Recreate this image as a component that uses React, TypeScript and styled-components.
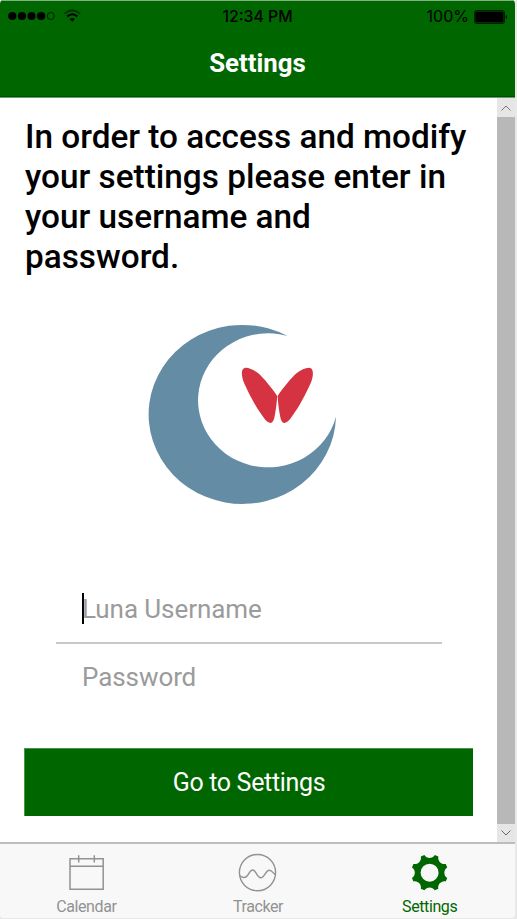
import React from "react";
import styled, { createGlobalStyle } from "styled-components";

const GREEN = "#006600";

const GlobalStyle = createGlobalStyle`
  * { box-sizing: border-box; }
  body { margin: 0; background: #e8e8e8; font-family: Roboto, sans-serif; }
`;

const Phone = styled.div`
  width: 515px;
  height: 918px;
  display: grid;
  grid-template-columns: minmax(0, 1fr);
  grid-template-rows: 98px 744px 76px;
  background: #fff;
  border-radius: 4px;
  overflow: hidden;
`;

const Header = styled.header`
  background: ${GREEN};
  border-top: 1px solid #85b085;
  border-bottom: 1px solid #669c66;
  box-shadow: inset 0 -1px #004f00;
  display: grid;
  grid-template-rows: 29px 1fr;
`;

const StatusBar = styled.div`
  display: grid;
  grid-template-columns: 1fr auto 1fr;
  align-items: center;
  padding: 0 6px 0 8px;
  font: 500 16px/29px Inter, sans-serif;
  color: #000;
`;

const Signal = styled.svg`
  display: block;
`;

const Clock = styled.span`
  font-size: 15.8px;
  padding-right: 2px;
`;

const BatteryGroup = styled.div`
  display: flex;
  justify-content: flex-end;
  align-items: center;
  gap: 5px;
  font-size: 16px;
  font-weight: 400;
  padding-top: 1px;
`;

const Title = styled.h1`
  margin: 0;
  padding-top: 17px;
  text-align: center;
  color: #fff;
  font-size: 25.8px;
  line-height: 33px;
  font-weight: 700;
`;

const Body = styled.div`
  display: grid;
  grid-template-columns: minmax(0, 1fr) 18px;
`;

const Content = styled.main`
  display: flex;
  flex-direction: column;
  padding: 19px 24px 0;
`;

const Prompt = styled.p`
  margin: 0 0 0 1px;
  width: 446px;
  font-size: 33.35px;
  line-height: 40px;
  font-weight: 500;
  color: #000;
`;

const Logo = styled.svg`
  display: block;
  margin: 43px 0 0 120px;
`;

const Form = styled.form`
  display: flex;
  flex-direction: column;
  margin-top: 57px;
`;

const Field = styled.label<{ $divided?: boolean }>`
  display: flex;
  align-items: center;
  height: ${(p) => (p.$divided ? "67px" : "68px")};
  margin: 0 31px 0 32px;
  padding: 0 0 2px 26px;
  border-bottom: ${(p) => (p.$divided ? "2px solid #c8c8cd" : "none")};
  color: #9b9b9b;
  font-size: 26px;
  letter-spacing: -0.08px;
`;

const Caret = styled.span`
  width: 2px;
  height: 31px;
  margin-right: -2px;
  background: #000;
`;

const Submit = styled.button`
  height: 68px;
  margin-top: 36px;
  border: 0;
  border-top: 1px solid #4b924b;
  border-left: 1px solid #4b924b;
  padding: 0;
  background: ${GREEN};
  color: #fff;
  font: 400 25px Roboto, sans-serif;
  letter-spacing: -0.33px;
`;

const Scrollbar = styled.div`
  display: grid;
  grid-template-rows: 19px 1fr 18px;
`;

const ScrollButton = styled.div`
  display: grid;
  place-items: center;
  background: #e6e6e6;
`;

const Thumb = styled.div`
  background: #b8b8b8;
`;

const TabBar = styled.nav`
  display: grid;
  grid-template-columns: repeat(3, 1fr);
  background: #f8f8f8;
  border-top: 2px solid #bdbdbd;
`;

const Tab = styled.div<{ $active?: boolean }>`
  display: flex;
  flex-direction: column;
  align-items: center;
  padding-top: 9px;
  gap: 4px;
  color: ${(p) => (p.$active ? GREEN : "#929292")};
  font-size: 16px;
  line-height: 20px;
  letter-spacing: -0.4px;
`;

const TabLabel = styled.span`
  padding-left: 1px;
`;

const gearPath = Array.from({ length: 8 }, (_, i) => {
  const point = (radius: number, degrees: number) => {
    const a = ((degrees + i * 45) * Math.PI) / 180;
    return `${(20.6 + radius * Math.cos(a)).toFixed(2)} ${(19.7 + radius * Math.sin(a)).toFixed(2)}`;
  };
  return `${i ? "L" : "M"}${point(18.4, 16.5)} L${point(18.4, 28.5)} C${point(14.1, 33)} ${point(14.1, 57)} ${point(18.4, 61.5)}`;
}).join(" ");

export default function App() {
  return (
    <>
      <GlobalStyle />
      <Phone>
        <Header>
          <StatusBar>
            <Signal width="76" height="18" viewBox="0 0 76 18">
              {[4.3, 13.9, 23.5, 33.1].map((x) => (
                <circle key={x} cx={x} cy="9" r="4.1" />
              ))}
              <circle cx="42.8" cy="9" r="3.6" fill="none" stroke="#000" strokeWidth=".7" />
              <g fill="none" stroke="#000">
                <path d="M56.5 6.8Q64.3 0 72.1 6.8" strokeWidth="2" opacity=".45" />
                <path d="M59.2 9.5Q64.3 5 69.4 9.5" strokeWidth="2" />
              </g>
              <path d="M61.6 12Q64.3 9.8 67 12L64.3 14.8Z" />
            </Signal>
            <Clock>12:34 PM</Clock>
            <BatteryGroup>
              100%
              <svg width="35" height="14" viewBox="0 0 35 14">
                <rect x=".5" y=".5" width="30" height="13" rx="2" fill="none" stroke="#000" strokeWidth=".7" />
                <rect x="1.2" y="1.5" width="28.4" height="11" rx="1" />
                <path d="M31.8 4.5Q34.2 7 31.8 9.5Z" />
              </svg>
            </BatteryGroup>
          </StatusBar>
          <Title>Settings</Title>
        </Header>
        <Body>
          <Content>
            <Prompt>In order to access and modify your settings please enter in your username and password.</Prompt>
            <Logo width="200" height="200" viewBox="144 320 200 200">
              <path fill="#648ca5" d="M287.5 336A93.7 89.5 0 1 0 336 416.5A70 67 0 1 1 287.5 336Z" />
              <g fill="#d63342">
                <path d="M277.2 396C271 387 264 378.5 258.3 373.3C254 370 249.5 368 246 367.8C242.5 367.8 241.5 371 242 375.5C242.5 379 243.5 382 245 385C248 391.5 251.5 398.5 255 404.5C258 409.5 261 414 263.8 417.8C266 421 268.3 423 270.5 423C273 423 274.2 419 274.8 415.5C276 409.5 276.8 402.5 277.2 396Z" />
                <path d="M277.6 396C283.8 387 290.8 378.5 296.5 373.3C300.8 370 305.3 368 308.8 367.8C312.3 367.8 313.3 371 312.8 375.5C312.3 379 311.3 382 309.8 385C306.8 391.5 303.3 398.5 299.8 404.5C296.8 409.5 293.8 414 291 417.8C288.8 421 286.5 423 284.3 423C281.8 423 280.6 419 280 415.5C278.8 409.5 278 402.5 277.6 396Z" />
              </g>
            </Logo>
            <Form>
              <Field $divided><Caret />Luna Username</Field>
              <Field>Password</Field>
              <Submit type="button">Go to Settings</Submit>
            </Form>
          </Content>
          <Scrollbar>
            <ScrollButton>
              <svg width="10" height="6" fill="none" stroke="#777"><path d="M.5 5.5L5 1L9.5 5.5" /></svg>
            </ScrollButton>
            <Thumb />
            <ScrollButton>
              <svg width="10" height="6" fill="none" stroke="#666"><path d="M.5 .5L5 5L9.5 .5" /></svg>
            </ScrollButton>
          </Scrollbar>
        </Body>
        <TabBar>
          <Tab>
            <svg width="40" height="40" viewBox="0 0 40 40" fill="none" stroke="currentColor" strokeWidth="1.5">
              <path d="M4 5.8H37.2V36.3H4ZM4 13.3H37.2M12.7 2.3V9.5M28.3 2.3V9.5" />
            </svg>
            <TabLabel>Calendar</TabLabel>
          </Tab>
          <Tab>
            <svg width="40" height="40" viewBox="0 0 40 40" fill="none" stroke="currentColor" strokeWidth="1.4">
              <circle cx="20.5" cy="19.6" r="18.1" />
              <path d="M2.8 22.5C4.5 24.7 8.5 25.5 10.5 22.5C12.5 19.5 13.5 17 15.8 17C19 17 20 24.8 23.7 24.8C27.5 24.8 28.5 17.3 32.3 17.3C35 17.3 36 20 38.2 21.5" />
            </svg>
            <TabLabel>Tracker</TabLabel>
          </Tab>
          <Tab $active>
            <svg width="40" height="40" viewBox="0 0 40 40">
              <path fill="currentColor" fillRule="evenodd" d={`${gearPath}Z M29.6 19.7A9 9 0 1 0 11.6 19.7A9 9 0 1 0 29.6 19.7Z`} />
            </svg>
            <TabLabel>Settings</TabLabel>
          </Tab>
        </TabBar>
      </Phone>
    </>
  );
}
